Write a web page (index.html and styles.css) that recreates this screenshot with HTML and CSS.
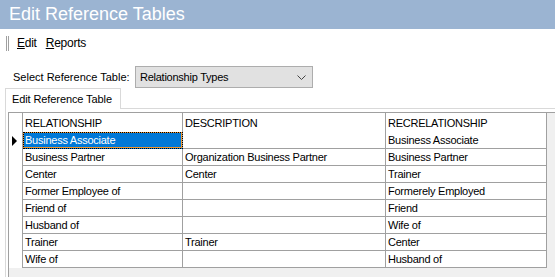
FILE: index.html
```html
<!DOCTYPE html>
<html lang="en">
<head>
    <meta charset="UTF-8">
    <meta name="viewport" content="width=device-width, initial-scale=1.0">
    <title>Edit Reference Tables</title>
    <link rel="stylesheet" href="styles.css">
</head>
<body>
    <div class="titlebar">Edit Reference Tables</div>

    <div class="menubar">
        <span class="grip"></span>
        <span class="menu-item"><u>E</u>dit</span>
        <span class="menu-item"><u>R</u>eports</span>
    </div>

    <div class="selector">
        <label class="selector-label" for="refTable">Select Reference Table:</label>
        <div class="combo" id="refTable">
            <span>Relationship Types</span>
            <svg class="combo-arrow" width="9" height="5" viewBox="0 0 9 5">
                <polyline points="0.5,0.5 4.5,4.5 8.5,0.5" fill="none" stroke="#444" stroke-width="1"/>
            </svg>
        </div>
    </div>

    <div class="tabstrip">
        <div class="tab">Edit Reference Table</div>
        <div class="tab-filler"></div>
    </div>

    <div class="tab-panel">
        <div class="grid">
            <div class="grid-row grid-head">
                <div class="row-head"></div>
                <div class="cell col1">RELATIONSHIP</div>
                <div class="cell col2">DESCRIPTION</div>
                <div class="cell col3">RECRELATIONSHIP</div>
            </div>
            <div class="grid-row">
                <div class="row-head"><span class="current"></span></div>
                <div class="cell col1 selected">Business Associate</div>
                <div class="cell col2"></div>
                <div class="cell col3">Business Associate</div>
            </div>
            <div class="grid-row">
                <div class="row-head"></div>
                <div class="cell col1">Business Partner</div>
                <div class="cell col2">Organization Business Partner</div>
                <div class="cell col3">Business Partner</div>
            </div>
            <div class="grid-row">
                <div class="row-head"></div>
                <div class="cell col1">Center</div>
                <div class="cell col2">Center</div>
                <div class="cell col3">Trainer</div>
            </div>
            <div class="grid-row">
                <div class="row-head"></div>
                <div class="cell col1">Former Employee of</div>
                <div class="cell col2"></div>
                <div class="cell col3">Formerely Employed</div>
            </div>
            <div class="grid-row">
                <div class="row-head"></div>
                <div class="cell col1">Friend of</div>
                <div class="cell col2"></div>
                <div class="cell col3">Friend</div>
            </div>
            <div class="grid-row">
                <div class="row-head"></div>
                <div class="cell col1">Husband of</div>
                <div class="cell col2"></div>
                <div class="cell col3">Wife of</div>
            </div>
            <div class="grid-row">
                <div class="row-head"></div>
                <div class="cell col1">Trainer</div>
                <div class="cell col2">Trainer</div>
                <div class="cell col3">Center</div>
            </div>
            <div class="grid-row">
                <div class="row-head"></div>
                <div class="cell col1">Wife of</div>
                <div class="cell col2"></div>
                <div class="cell col3">Husband of</div>
            </div>
        </div>
    </div>
</body>
</html>
```

FILE: styles.css
```css
body {
    margin: 0;
    width: 555px;
    height: 277px;
    overflow: hidden;
    font-family: "Liberation Sans", Arial, sans-serif;
    background-color: #fff;
    color: #000;
}

.titlebar {
    height: 29px;
    line-height: 29px;
    padding-left: 9px;
    background-color: #9bb4d2;
    color: #fff;
    font-size: 18px;
}

.menubar {
    display: flex;
    align-items: center;
    gap: 9px;
    height: 28px;
    padding-left: 6px;
    font-size: 12px;
    letter-spacing: -0.25px;
}

.grip {
    width: 1px;
    height: 15px;
    border-left: 1px solid #a0a0a0;
    border-right: 1px solid #a0a0a0;
    margin-right: -1px;
}

.selector {
    display: flex;
    align-items: center;
    height: 22px;
    margin-top: 9px;
    padding-left: 13px;
    font-size: 11px;
}

.selector-label {
    width: 122px;
}

.combo {
    display: flex;
    align-items: center;
    justify-content: space-between;
    box-sizing: border-box;
    width: 178px;
    height: 22px;
    padding: 0 6px 0 4px;
    border: 1px solid #adadad;
    background-color: #e1e1e1;
    letter-spacing: -0.25px;
}

.tabstrip {
    display: flex;
    height: 21px;
}

.tab {
    box-sizing: border-box;
    width: 116px;
    height: 21px;
    margin-left: 5px;
    padding-left: 6px;
    line-height: 20px;
    border: 1px solid #d9d9d9;
    border-bottom: none;
    font-size: 11px;
    letter-spacing: -0.1px;
}

.tab-filler {
    flex: 1;
    border-bottom: 1px solid #d9d9d9;
}

.tab-panel {
    margin-left: 5px;
    padding: 3px 0 0 2px;
    border-left: 1px solid #d9d9d9;
}

.grid {
    height: 164px;
    overflow: hidden;
    border-top: 1px solid #a0a0a0;
    border-left: 1px solid #a0a0a0;
    background-color: #f0f0f0;
    font-size: 11px;
    letter-spacing: -0.25px;
}

.grid-row {
    display: flex;
    height: 17px;
}

.grid-head {
    height: 19px;
}

.row-head {
    box-sizing: border-box;
    width: 14px;
    border-right: 1px solid #a0a0a0;
    background-color: #fff;
    display: flex;
    align-items: center;
}

.current {
    width: 0;
    height: 0;
    margin-left: 3px;
    border-left: 5px solid #000;
    border-top: 5px solid transparent;
    border-bottom: 5px solid transparent;
}

.cell {
    box-sizing: border-box;
    padding-left: 2px;
    line-height: 16px;
    white-space: nowrap;
    overflow: hidden;
    background-color: #fff;
    border-right: 1px solid #a0a0a0;
    border-bottom: 1px solid #a0a0a0;
}

.grid-head .cell {
    line-height: 20px;
    border-bottom: none;
}

.col1 { width: 160px; }
.col2 { width: 203px; }
.col3 { width: 161px; }

.cell.selected {
    background-color: #0078d7;
    color: #fff;
    border-bottom-color: #0078d7;
    box-shadow: inset 0 0 0 1px #f0962c;
    outline: 1px dotted #000;
    outline-offset: -1px;
}
```
